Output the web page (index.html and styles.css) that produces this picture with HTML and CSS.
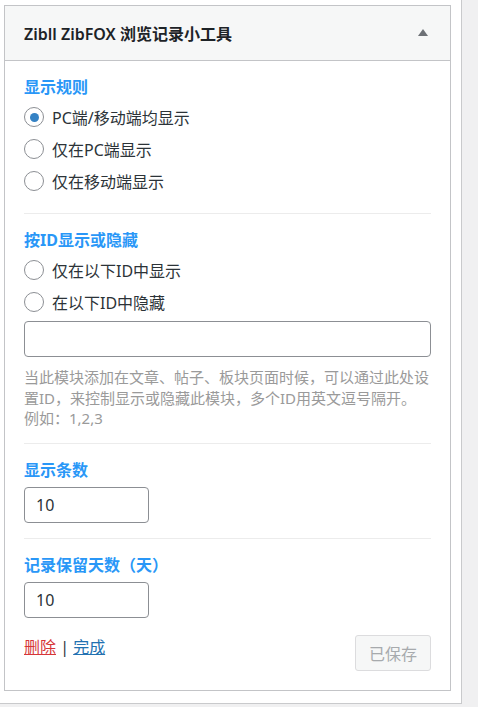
FILE: index.html
```html
<!DOCTYPE html>
<html lang="zh-CN">
<head>
<meta charset="utf-8">
<title>Zibll ZibFOX 浏览记录小工具</title>
<link rel="stylesheet" href="styles.css">
</head>
<body>
<div class="outer">
  <div class="widget">
    <div class="widget-top">
      <h3 class="widget-title">Zibll ZibFOX 浏览记录小工具</h3>
      <span class="toggle"></span>
    </div>
    <div class="widget-inside">
      <div class="section">
        <div class="label">显示规则</div>
        <label class="radio-row"><input type="radio" name="rule" checked><span>PC端/移动端均显示</span></label>
        <label class="radio-row"><input type="radio" name="rule"><span>仅在PC端显示</span></label>
        <label class="radio-row"><input type="radio" name="rule"><span>仅在移动端显示</span></label>
      </div>
      <div class="section section-id">
        <div class="label">按ID显示或隐藏</div>
        <label class="radio-row"><input type="radio" name="idrule"><span>仅在以下ID中显示</span></label>
        <label class="radio-row"><input type="radio" name="idrule"><span>在以下ID中隐藏</span></label>
        <input class="text-input wide" type="text">
        <p class="help">当此模块添加在文章、帖子、板块页面时候，可以通过此处设置ID，来控制显示或隐藏此模块，多个ID用英文逗号隔开。例如：1,2,3</p>
      </div>
      <div class="section section-count">
        <div class="label">显示条数</div>
        <input class="text-input short" type="text" value="10">
      </div>
      <div class="section last">
        <div class="label">记录保留天数（天）</div>
        <input class="text-input short" type="text" value="10">
        <div class="actions">
          <div class="links"><a class="delete" href="#">删除</a> | <a class="done" href="#">完成</a></div>
          <button class="save" disabled>已保存</button>
        </div>
      </div>
    </div>
  </div>
</div>
</body>
</html>
```
FILE: styles.css
```css
* { box-sizing: border-box; }
html, body { margin: 0; padding: 0; }
body {
  background: #f0f0f1;
  font-family: "Noto Sans", "Noto Sans CJK SC", sans-serif;
  color: #2c3338;
  width: 478px;
  height: 707px;
  overflow: hidden;
}
.outer {
  width: 462px;
  background: #fff;
  border-right: 1px solid #c9cacc;
  border-bottom: 1px solid #c9cacc;
  padding: 5px 0 12px 4px;
}
.widget {
  width: 447px;
  border: 1px solid #c3c4c7;
  background: #fff;
}
.widget-top {
  height: 55px;
  background: #f6f7f7;
  border-bottom: 1px solid #c3c4c7;
  display: flex;
  align-items: center;
  justify-content: space-between;
  padding: 0 22px 0 19px;
}
.widget-title {
  margin: 0;
  font-size: 16px;
  font-weight: 600;
  color: #1d2327;
}
.toggle {
  width: 0;
  height: 0;
  border-left: 5px solid transparent;
  border-right: 5px solid transparent;
  border-bottom: 7px solid #6d7176;
  margin-top: -1px;
}
.widget-inside { padding: 0 19px; }
.section {
  padding: 14px 0 16px;
  border-bottom: 1px solid #ececec;
  display: flex;
  flex-direction: column;
  align-items: flex-start;
}
.section.last { border-bottom: 0; padding-bottom: 19px; align-items: stretch; }
.section-id { padding-bottom: 14px; align-items: stretch; }
.section-count { padding-bottom: 15px; }
.label {
  font-size: 16px;
  line-height: 24px;
  font-weight: 700;
  color: #2997f7;
  margin-bottom: 2px;
}
.radio-row {
  display: flex;
  align-items: center;
  height: 32px;
  font-size: 16px;
  color: #2c3338;
  cursor: pointer;
}
.radio-row input {
  appearance: none;
  -webkit-appearance: none;
  width: 20px;
  height: 20px;
  margin: 0 8px 0 0;
  border: 1px solid #8c8f94;
  border-radius: 50%;
  background: #fff;
  display: flex;
  align-items: center;
  justify-content: center;
  flex: none;
}
.radio-row input:checked::before {
  content: "";
  width: 9px;
  height: 9px;
  border-radius: 50%;
  background: #3582c4;
}
.text-input {
  height: 36px;
  border: 1px solid #8c8f94;
  border-radius: 4px;
  background: #fff;
  font-family: inherit;
  font-size: 16px;
  color: #2c3338;
  padding: 0 11px;
  margin: 3px 0 0;
  outline: none;
}
.text-input.wide { width: 407px; }
.text-input.short { width: 125px; }
.help {
  margin: 10px 0 0;
  font-size: 15px;
  line-height: 20.5px;
  color: #9a9a9a;
}
.actions {
  display: flex;
  justify-content: space-between;
  align-items: flex-start;
  margin-top: 17px;
}
.links {
  font-size: 16px;
  line-height: 24px;
  color: #2c3338;
}
.links a { text-decoration: underline; }
.links .delete { color: #d63638; }
.links .done { color: #2271b1; }
.save {
  width: 76px;
  height: 36px;
  background: #f6f7f7;
  border: 1px solid #dcdcde;
  border-radius: 3px;
  color: #a7aaad;
  font-family: inherit;
  font-size: 16px;
  padding: 0;
}
```
